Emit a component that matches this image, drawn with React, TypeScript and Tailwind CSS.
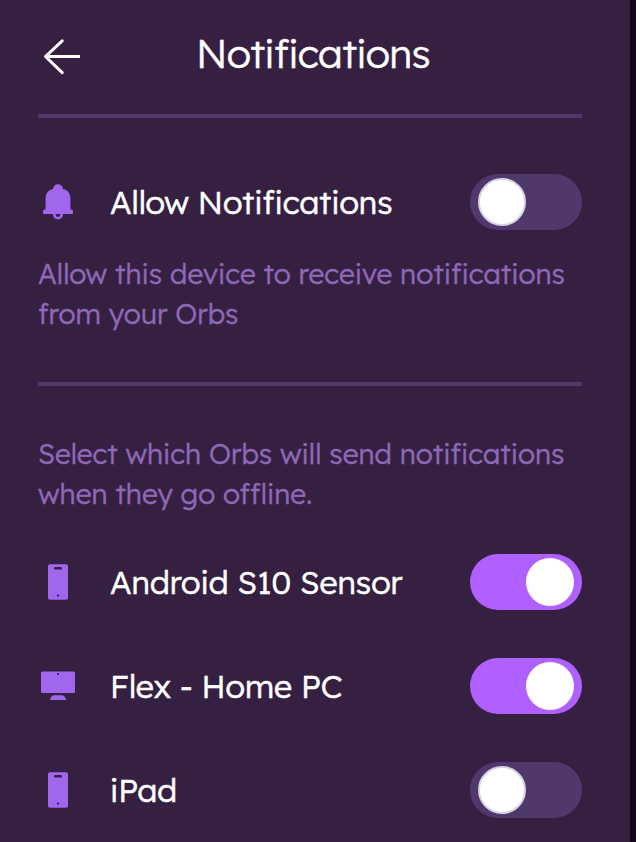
import React from "react";

const divider = "h-1 w-full bg-[#51376b]";

function Line({ text, width, className }: { text: string; width: number; className: string }) {
  const ref = React.useRef<HTMLSpanElement>(null);
  const [spacing, setSpacing] = React.useState(0);
  React.useLayoutEffect(() => {
    const el = ref.current;
    if (el) setSpacing((width - el.getBoundingClientRect().width) / text.length);
  }, []);
  return (
    <span ref={ref} className={`block w-max whitespace-nowrap ${className}`} style={{ letterSpacing: `${spacing}px` }}>
      {text}
    </span>
  );
}

function Toggle({ on = false }: { on?: boolean }) {
  return (
    <button
      role="switch"
      aria-checked={on}
      className={`flex h-14 w-28 shrink-0 items-center rounded-full px-2 ${on ? "justify-end bg-[#af60ff]" : "justify-start bg-[#50386d]"}`}
    >
      <span className={`size-12 rounded-full bg-white ${on ? "" : "border-2 border-[#d8d6dd]"}`} />
    </button>
  );
}

function Bell() {
  return (
    <svg className="h-10 w-10" viewBox="0 0 40 40" fill="#a066ee">
      <circle cx="20" cy="7.300" r="5" />
      <path d="M7.600 15.700a9 9 0 0 1 9-9h6.800a9 9 0 0 1 9 9V27.400h1.100a1.500 1.500 0 0 1 1.500 1.500v2.200a1 1 0 0 1-1 1H6a1 1 0 0 1-1-1v-2.200a1.500 1.500 0 0 1 1.500-1.500h1.100Z" />
      <path d="M16.300 31.500v1a3.700 3.700 0 0 0 7.400 0v-1" fill="none" stroke="#a066ee" strokeWidth="2.600" />
    </svg>
  );
}

function Phone() {
  return (
    <svg className="h-10 w-10" viewBox="0 0 40 40">
      <rect x="10" y="2.300" width="20" height="35.500" rx="2" fill="#a066ee" />
      <rect x="16" y="5" width="8" height="2.500" rx="1.250" fill="#36203f" />
      <circle cx="20" cy="33.600" r="1.200" fill="#36203f" />
    </svg>
  );
}

function Monitor() {
  return (
    <svg className="h-10 w-10" viewBox="0 0 40 40" fill="#a066ee">
      <rect x="3" y="5.400" width="34" height="21.600" rx="1.500" />
      <path d="M16 29.200h8c1.500 0 4 2.200 4 4.800H12c0-2.600 2.500-4.800 4-4.800Z" />
      <circle cx="20" cy="8" r="1.100" fill="#36203f" />
    </svg>
  );
}

function Row({ icon, label, width, on }: { icon: React.ReactNode; label: string; width: number; on?: boolean }) {
  return (
    <div className="flex h-14 items-center">
      <div className="mr-8 w-10">{icon}</div>
      <div className="flex-1">
        <Line text={label} width={width} className="text-[32px] leading-[42px] text-white [-webkit-text-stroke:0.6px]" />
      </div>
      <Toggle on={on} />
    </div>
  );
}

export default function App() {
  return (
    <div className="flex h-[842px] w-[636px] overflow-hidden bg-[#150919] font-[Lexend,Lato,sans-serif] font-light [-webkit-text-stroke:0.4px]">
      <main className="h-full w-[630px] bg-[#362041] pr-12 pl-[38px]">
        <header className="flex h-[114px] items-center">
          <svg className="h-10 w-12" viewBox="0 0 48 40" fill="none" stroke="white" strokeWidth="3" strokeLinecap="round" strokeLinejoin="round">
            <path d="M24.200 3.800 7.500 19.500l16.700 16.200" />
            <path d="M8 19.500h34" strokeLinecap="butt" />
          </svg>
          <div className="mb-2 ml-[110px]">
            <Line text="Notifications" width={234} className="text-[40px] leading-[50px] text-white" />
          </div>
        </header>
        <div className={divider} />
        <section className="pt-14">
          <Row icon={<Bell />} label="Allow Notifications" width={282.5} />
          <div className="mt-6 text-[#8e69b8]">
            <Line text="Allow this device to receive notifications" width={527} className="text-[28px] leading-10" />
            <Line text="from your Orbs" width={200.5} className="text-[28px] leading-10" />
          </div>
        </section>
        <div className={`mt-12 ${divider}`} />
        <section className="pt-12 text-[#8e69b8]">
          <Line text="Select which Orbs will send notifications" width={526.5} className="text-[28px] leading-10" />
          <Line text="when they go offline." width={274.5} className="text-[28px] leading-10" />
        </section>
        <section className="mt-10 flex flex-col gap-12">
          <Row icon={<Phone />} label="Android S10 Sensor" width={292.5} on />
          <Row icon={<Monitor />} label="Flex - Home PC" width={232.5} on />
          <Row icon={<Phone />} label="iPad" width={67} />
        </section>
      </main>
    </div>
  );
}
